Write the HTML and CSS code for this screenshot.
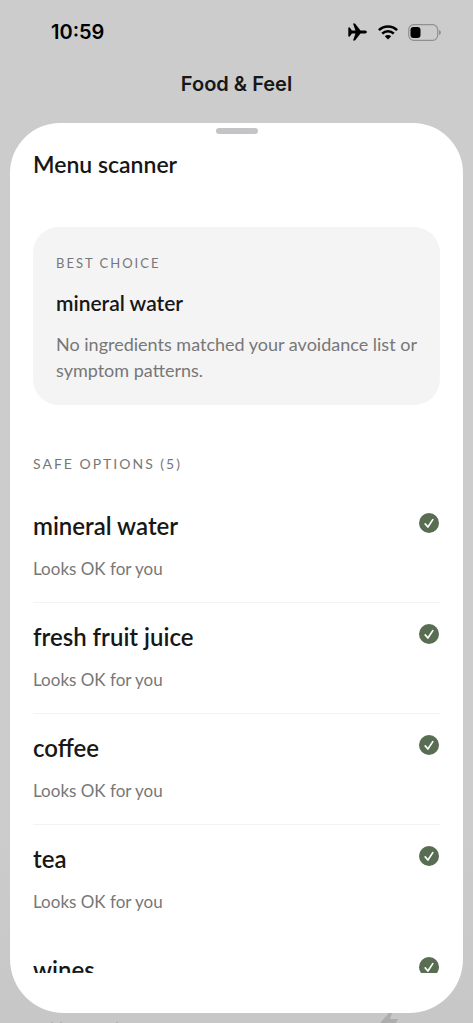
FILE: index.html
```html
<!DOCTYPE html>
<html lang="en">
<head>
<meta charset="utf-8">
<meta name="viewport" content="width=device-width, initial-scale=1">
<title>Food &amp; Feel</title>
<link rel="stylesheet" href="styles.css">
</head>
<body>
<svg class="defs" width="0" height="0" aria-hidden="true">
  <symbol id="check" viewBox="0 0 20 20">
    <circle cx="10" cy="10" r="10" fill="#586d52"/>
    <path d="M6.2 10.9 8.9 14 13.8 6.6" fill="none" stroke="#fff" stroke-width="1.7" stroke-linecap="round" stroke-linejoin="round"/>
  </symbol>
</svg>
<div class="screen">
  <header class="status">
    <time class="clock">10:59</time>
    <div class="indicators">
      <svg width="20" height="18" viewBox="0 0 20 18" role="img" aria-label="Airplane mode"><path d="M19 9c0 .9-1.200 1.500-2.600 1.500h-3.900L7 17.500H5L7.500 10.600H3.900L1.800 13.400H.3V4.600h1.500l2.100 2.800h3.600L5 .5h2l5.500 7h3.900c1.400 0 2.600.6 2.600 1.500Z"/></svg>
      <svg width="20" height="16" viewBox="0 0 20 16" role="img" aria-label="Wi-Fi"><g fill="none" stroke="#000" stroke-width="2.500"><path d="M.9 6.100a13 13 0 0 1 18.200 0"/><path d="M4.200 9.600a8.300 8.300 0 0 1 11.600 0"/></g><path d="M6.800 12.300a4.600 4.600 0 0 1 6.400 0L10 15.600Z"/></svg>
      <svg width="33" height="17" viewBox="0 0 33 17" role="img" aria-label="Battery low"><rect x=".7" y=".7" width="29" height="15.600" rx="5" fill="none" stroke="#909090" stroke-width="1.200"/><rect x="2.500" y="3" width="10" height="11" rx="3"/><path d="M31 6v5q2-.8 2-2.500T31 6Z" fill="#909090"/></svg>
    </div>
  </header>
  <h1 class="app-title">Food &amp; Feel</h1>

  <main class="sheet">
    <button class="grabber" aria-label="Resize sheet"></button>
    <h2 class="sheet-title">Menu scanner</h2>
    <div class="scroll">
      <section class="best">
        <p class="label">BEST CHOICE</p>
        <h3 class="best-name">mineral water</h3>
        <p class="best-note">No ingredients matched your avoidance list or symptom patterns.</p>
      </section>
      <section>
        <h3 class="label options-label">SAFE OPTIONS (5)</h3>
        <ul class="options">
          <li class="option"><div><h4 class="name">mineral water</h4><p class="note">Looks OK for you</p></div><svg class="check" role="img" aria-label="Safe"><use href="#check"/></svg></li>
          <li class="option"><div><h4 class="name">fresh fruit juice</h4><p class="note">Looks OK for you</p></div><svg class="check" role="img" aria-label="Safe"><use href="#check"/></svg></li>
          <li class="option"><div><h4 class="name">coffee</h4><p class="note">Looks OK for you</p></div><svg class="check" role="img" aria-label="Safe"><use href="#check"/></svg></li>
          <li class="option"><div><h4 class="name">tea</h4><p class="note">Looks OK for you</p></div><svg class="check" role="img" aria-label="Safe"><use href="#check"/></svg></li>
          <li class="option"><div><h4 class="name">wines</h4></div><svg class="check" role="img" aria-label="Safe"><use href="#check"/></svg></li>
        </ul>
      </section>
    </div>
  </main>
  <footer class="peek" aria-hidden="true">
    <svg width="70" height="10" viewBox="0 0 70 10"><path d="M2 9h2v1H2ZM11 9h2v1h-2ZM67 9h2v1h-2Z" fill="#b0b0b0"/></svg>
    <svg width="20" height="10" viewBox="0 0 20 10"><path d="M0 10 9 0h3l-2 6h8l-2 4Z" fill="#adadad"/></svg>
  </footer>
</div>
</body>
</html>
```

FILE: styles.css
```css
* { box-sizing: border-box; }
body, h1, h2, h3, h4, p, ul { margin: 0; padding: 0; }
body {
  font-family: Lato, "Liberation Sans", sans-serif;
  color: #171717;
  background: #ccc;
}
.defs { position: absolute; }
.screen {
  height: 100vh;
  display: flex;
  flex-direction: column;
  background: linear-gradient(#ccc 80%, #c7c7c7);
}
.status {
  display: flex;
  justify-content: space-between;
  align-items: center;
  height: 64px;
  padding: 0 32px 0 51px;
}
.clock { font: 600 20px/24px Inter, sans-serif; color: #000; }
.indicators { display: flex; align-items: center; gap: 10px; }
.app-title {
  font: 600 20px/24px Inter, sans-serif;
  text-align: center;
  padding: 8px 0 27px;
}
.sheet {
  flex: 1;
  min-height: 0;
  margin: 0 10px;
  padding: 0 23px 40px;
  border-radius: 50px 50px 54px 54px;
  background: #fff;
  display: flex;
  flex-direction: column;
}
.grabber {
  align-self: center;
  flex: none;
  width: 42px;
  height: 6px;
  margin-top: 5px;
  padding: 0;
  border: 0;
  border-radius: 3px;
  background: #c4c4c6;
}
.sheet-title {
  font-size: 23px;
  line-height: 32px;
  font-weight: 600;
  padding: 14px 0 47px;
}
.scroll { flex: 1; min-height: 0; overflow: hidden; }
.best {
  border-radius: 26px;
  background: #f4f4f4;
  padding: 24px 16px 22px 23px;
}
.label {
  font-size: 14px;
  line-height: 24px;
  font-weight: 400;
  letter-spacing: 2px;
  color: #777;
}
.best .label { font-size: 13px; }
.best-name {
  font-size: 21px;
  line-height: 32px;
  font-weight: 600;
  padding: 12px 0;
}
.best-note { font-size: 18px; line-height: 26px; color: #777; }
.options-label { padding-top: 47px; }
.options { list-style: none; padding-top: 16px; }
.option {
  display: flex;
  justify-content: space-between;
  align-items: flex-start;
  padding: 17px 0 21px;
  border-bottom: 1px solid #f3f3f3;
}
.option:nth-last-child(-n+2) { border-color: transparent; }
.name { font-size: 24px; line-height: 34px; font-weight: 600; }
.note { font-size: 17px; line-height: 24px; padding-top: 14px; color: #777; }
.check { flex: none; width: 20px; height: 20px; margin: 4px 1px 0 0; }
.peek {
  display: flex;
  justify-content: space-between;
  height: 10px;
  padding: 0 73px 0 49px;
}
```
